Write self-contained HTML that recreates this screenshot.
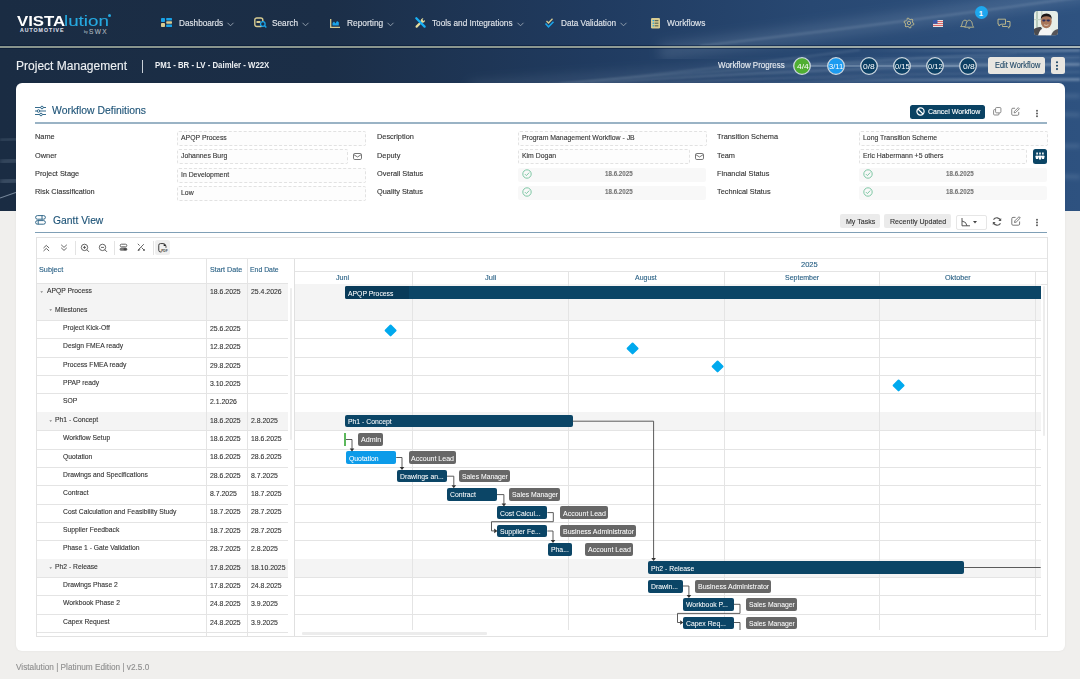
<!DOCTYPE html>
<html><head><meta charset="utf-8"><title>Vistalution</title>
<style>
html,body{margin:0;padding:0;}
body{width:1080px;height:679px;overflow:hidden;position:relative;background:#f0efed;font-family:"Liberation Sans", sans-serif;}
svg{position:absolute;overflow:visible;}
.t{-webkit-text-stroke:0.12px currentColor;}
</style></head><body>
<div style="position:absolute;left:0px;top:0px;width:1080px;height:211px;background:linear-gradient(90deg,#1a2c43 0%,#1b2e47 30%,#203b60 55%,#284872 75%,#2e5280 100%);"></div>
<svg style="left:0;top:0" width="1080" height="211" viewBox="0 0 1080 211">
<defs>
<filter id="bl1"><feGaussianBlur stdDeviation="1"/></filter>
<filter id="bl2"><feGaussianBlur stdDeviation="2"/></filter>
<filter id="bl6"><feGaussianBlur stdDeviation="6"/></filter>
</defs>
<path d="M660 52 C 800 35, 950 15, 1100 -10" stroke="#b8cde0" stroke-opacity="0.16" stroke-width="16" fill="none" filter="url(#bl6)"/>
<path d="M700 46 C 820 32, 960 14, 1090 -4" stroke="#d5e3ef" stroke-opacity="0.22" stroke-width="1.6" fill="none" filter="url(#bl1)"/>
<path d="M470 88 C 650 74, 850 64, 1080 60" stroke="#b8cde0" stroke-opacity="0.14" stroke-width="10" fill="none" filter="url(#bl6)"/>
<g fill="none" stroke="#dbe7f2" filter="url(#bl1)">
<path d="M540 85 C 660 76, 760 62, 860 50" stroke-opacity="0.25" stroke-width="1"/>
<path d="M560 84 C 680 74, 820 62, 1080 50" stroke-opacity="0.22" stroke-width="1.1"/>
<path d="M590 84 C 720 74, 880 66, 1080 64" stroke-opacity="0.24" stroke-width="1.2"/>
<path d="M620 85 C 760 78, 900 74, 1080 72" stroke-opacity="0.2" stroke-width="1.2"/>
<path d="M660 86 C 800 82, 940 80, 1080 80" stroke-opacity="0.2" stroke-width="1.5"/>
</g>


<defs><linearGradient id="hfade" x1="0" x2="1" y1="0" y2="0"><stop offset="0" stop-color="#d5e3ef" stop-opacity="0"/><stop offset="0.6" stop-color="#d5e3ef" stop-opacity="0.22"/><stop offset="1" stop-color="#d5e3ef" stop-opacity="0.3"/></linearGradient></defs>
<g filter="url(#bl1)"><rect x="860" y="49.5" width="220" height="2" fill="url(#hfade)"/><rect x="700" y="63.5" width="380" height="2.2" fill="url(#hfade)"/><rect x="780" y="78" width="300" height="2.5" fill="url(#hfade)"/><rect x="850" y="56" width="230" height="1.5" fill="url(#hfade)" opacity="0.6"/></g>
<path d="M0 140 L 20 139" stroke="#b8cde0" stroke-opacity="0.15" stroke-width="3" fill="none" filter="url(#bl1)"/>
<path d="M0 162 L 20 160" stroke="#b8cde0" stroke-opacity="0.25" stroke-width="4" fill="none" filter="url(#bl2)"/><path d="M0 182 L 20 180" stroke="#b8cde0" stroke-opacity="0.3" stroke-width="4" fill="none" filter="url(#bl2)"/>
<path d="M0 198 L 20 191" stroke="#cfe0f0" stroke-opacity="0.5" stroke-width="1.1" fill="none"/>
<path d="M1055 96 L1080 96 M1055 114 L1080 115 M1055 146 L1080 146 M1055 176 L1080 177" stroke="#b8cde0" stroke-opacity="0.22" stroke-width="3" fill="none" filter="url(#bl2)"/>
</svg>
<div style="position:absolute;left:0px;top:45.2px;width:1080px;height:1px;background:rgba(0,18,48,0.45);"></div>
<div style="position:absolute;left:0px;top:46px;width:1080px;height:1.9px;background:linear-gradient(90deg,#87938c 0%,#8b978f 50%,#a9b6b8 100%);"></div>
<div style="position:absolute;left:0px;top:47.9px;width:1080px;height:1px;background:rgba(0,18,48,0.45);"></div>
<div class="t" style="position:absolute;left:16.50px;top:13.38px;font-size:15.5px;line-height:15.5px;font-weight:700;color:#ffffff;transform:scaleX(1.0827);transform-origin:0 0;letter-spacing:0.000px;white-space:pre;-webkit-text-stroke:0;">VISTA</div>
<div class="t" style="position:absolute;left:63.50px;top:13.38px;font-size:15.5px;line-height:15.5px;font-weight:400;color:#26a9e0;transform:scaleX(1.2108);transform-origin:0 0;letter-spacing:0.000px;white-space:pre;">lution</div>
<div style="position:absolute;left:107.5px;top:14px;width:3px;height:3px;border-radius:50%;background:#26a9e0"></div>
<div class="t" style="position:absolute;left:20.00px;top:27.90px;font-size:5.2px;line-height:5.2px;font-weight:700;color:#d9dde3;transform:scaleX(1.0000);transform-origin:0 0;letter-spacing:1.002px;white-space:pre;">AUTOMOTIVE</div>
<div class="t" style="position:absolute;left:84.00px;top:31.04px;font-size:3.5px;line-height:3.5px;font-weight:400;color:#9aa6b3;transform:scaleX(1.0000);transform-origin:0 0;letter-spacing:0.000px;white-space:pre;">by</div>
<div class="t" style="position:absolute;left:89.00px;top:29.00px;font-size:6.5px;line-height:6.5px;font-weight:400;color:#aab4bd;transform:scaleX(1.0000);transform-origin:0 0;letter-spacing:1.419px;white-space:pre;">SWX</div>
<svg style="left:161px;top:18px" width="11" height="9" viewBox="0 0 11 9">
<rect x="0" y="0" width="4" height="4" rx="0.8" fill="#1aa3e8"/><rect x="0" y="5" width="4" height="4" rx="0.8" fill="#d8cc92"/>
<rect x="5.2" y="0" width="5.8" height="2.4" rx="0.6" fill="#1aa3e8"/><rect x="5.2" y="3.3" width="5.8" height="2.4" rx="0.6" fill="#d8cc92"/><rect x="5.2" y="6.6" width="5.8" height="2.4" rx="0.6" fill="#1aa3e8"/>
</svg>
<div class="t" style="position:absolute;left:178.60px;top:18.65px;font-size:8.8px;line-height:8.8px;font-weight:400;color:#e3e7ec;transform:scaleX(0.9322);transform-origin:0 0;letter-spacing:0.000px;white-space:pre;">Dashboards</div>
<svg style="left:227px;top:21.5px" width="7" height="5" viewBox="0 0 7 5"><path d="M0.5 0.8 L3.5 3.8 L6.5 0.8" stroke="#9aa6b3" stroke-width="0.9" fill="none"/></svg>
<svg style="left:254px;top:17px" width="13" height="11" viewBox="0 0 13 11">
<rect x="0.8" y="1" width="8" height="8.5" rx="2" stroke="#d8cc92" stroke-width="1.4" fill="none"/>
<rect x="2.5" y="4" width="4" height="2" fill="#d8cc92"/>
<circle cx="8.8" cy="7" r="2.3" stroke="#1aa3e8" stroke-width="1.3" fill="#1b2e47"/><path d="M10.4 8.6 L12.3 10.5" stroke="#1aa3e8" stroke-width="1.4"/>
</svg>
<div class="t" style="position:absolute;left:271.70px;top:18.65px;font-size:8.8px;line-height:8.8px;font-weight:400;color:#e3e7ec;transform:scaleX(0.9372);transform-origin:0 0;letter-spacing:0.000px;white-space:pre;">Search</div>
<svg style="left:302px;top:21.5px" width="7" height="5" viewBox="0 0 7 5"><path d="M0.5 0.8 L3.5 3.8 L6.5 0.8" stroke="#9aa6b3" stroke-width="0.9" fill="none"/></svg>
<svg style="left:329.5px;top:18.5px" width="10" height="9" viewBox="0 0 10 9">
<path d="M0.7 0 L0.7 8.3 L10 8.3" stroke="#d8cc92" stroke-width="1.3" fill="none"/>
<path d="M2.5 6.5 L2.5 4 L4 2.5 L5.5 4.5 L7 2 L8.8 3.2 L8.8 6.5 Z" fill="#1aa3e8"/>
</svg>
<div class="t" style="position:absolute;left:346.80px;top:18.65px;font-size:8.8px;line-height:8.8px;font-weight:400;color:#e3e7ec;transform:scaleX(0.9497);transform-origin:0 0;letter-spacing:0.000px;white-space:pre;">Reporting</div>
<svg style="left:387px;top:21.5px" width="7" height="5" viewBox="0 0 7 5"><path d="M0.5 0.8 L3.5 3.8 L6.5 0.8" stroke="#9aa6b3" stroke-width="0.9" fill="none"/></svg>
<svg style="left:414.5px;top:17px" width="11" height="11" viewBox="0 0 11 11">
<path d="M1.6 9.6 L7 4.2" stroke="#e6dc9c" stroke-width="2.2" stroke-linecap="round"/>
<path d="M6.2 5.2 C5 3.8, 6.2 1.2, 8.4 1.3 L7.4 2.9 L8.6 4 L10 3 C10.2 5, 8.2 6.4, 6.2 5.2 Z" fill="#e6dc9c"/>
<path d="M1.3 1.3 L9.6 9.6" stroke="#19b0f5" stroke-width="2.3" stroke-linecap="round"/>
</svg>
<div class="t" style="position:absolute;left:431.80px;top:18.65px;font-size:8.8px;line-height:8.8px;font-weight:400;color:#e3e7ec;transform:scaleX(0.9355);transform-origin:0 0;letter-spacing:0.000px;white-space:pre;">Tools and Integrations</div>
<svg style="left:516.5px;top:21.5px" width="7" height="5" viewBox="0 0 7 5"><path d="M0.5 0.8 L3.5 3.8 L6.5 0.8" stroke="#9aa6b3" stroke-width="0.9" fill="none"/></svg>
<svg style="left:545px;top:17.5px" width="9" height="10" viewBox="0 0 9 10">
<path d="M1.5 3 L3.5 5 L7.5 0.8" stroke="#d8cc92" stroke-width="1.3" fill="none"/>
<path d="M0.5 5.5 L3.5 8.8 L8.5 3.8" stroke="#1aa3e8" stroke-width="1.6" fill="none"/>
</svg>
<div class="t" style="position:absolute;left:561.30px;top:18.65px;font-size:8.8px;line-height:8.8px;font-weight:400;color:#e3e7ec;transform:scaleX(0.9323);transform-origin:0 0;letter-spacing:0.000px;white-space:pre;">Data Validation</div>
<svg style="left:620.3px;top:21.5px" width="7" height="5" viewBox="0 0 7 5"><path d="M0.5 0.8 L3.5 3.8 L6.5 0.8" stroke="#9aa6b3" stroke-width="0.9" fill="none"/></svg>
<svg style="left:651px;top:17.5px" width="9" height="10.5" viewBox="0 0 9 10.5">
<rect x="0" y="0" width="9" height="10.5" rx="1.2" fill="#d8cc92"/>
<rect x="1.6" y="2" width="1.4" height="1.2" fill="#1aa3e8"/><rect x="3.6" y="2" width="3.8" height="1.2" fill="#5d6b5a"/>
<rect x="1.6" y="4.6" width="1.4" height="1.2" fill="#1aa3e8"/><rect x="3.6" y="4.6" width="3.8" height="1.2" fill="#5d6b5a"/>
<rect x="1.6" y="7.2" width="1.4" height="1.2" fill="#1aa3e8"/><rect x="3.6" y="7.2" width="3.8" height="1.2" fill="#5d6b5a"/>
</svg>
<div class="t" style="position:absolute;left:667.20px;top:18.65px;font-size:8.8px;line-height:8.8px;font-weight:400;color:#e3e7ec;transform:scaleX(0.9484);transform-origin:0 0;letter-spacing:0.000px;white-space:pre;">Workflows</div>
<svg style="left:903px;top:17.3px" width="12" height="12" viewBox="0 0 12 12">
<path d="M9.90 6.00 L10.96 6.63 L10.61 7.94 L9.38 7.95 L7.95 9.38 L7.94 10.61 L6.63 10.96 L6.00 9.90 L4.05 9.38 L2.98 9.98 L2.02 9.02 L2.62 7.95 L2.10 6.00 L1.04 5.37 L1.39 4.06 L2.62 4.05 L4.05 2.62 L4.06 1.39 L5.37 1.04 L6.00 2.10 L7.95 2.62 L9.02 2.02 L9.98 2.98 L9.38 4.05 Z" stroke="#b7b48c" stroke-width="0.95" fill="none" stroke-linejoin="round"/>
<circle cx="6" cy="6" r="1.7" stroke="#b7b48c" stroke-width="0.95" fill="none"/>
</svg>
<svg style="left:932.8px;top:20.2px" width="10" height="7" viewBox="0 0 10 7">
<rect x="0" y="0" width="10" height="7" fill="#e8e3e3"/>
<rect x="0" y="1" width="10" height="1" fill="#d66"/><rect x="0" y="3" width="10" height="1" fill="#d66"/><rect x="0" y="5" width="10" height="1" fill="#d66"/>
<rect x="0" y="0" width="4.5" height="3.8" fill="#3b5aa8"/>
</svg>
<svg style="left:960px;top:18.5px" width="14" height="10" viewBox="0 0 14 10">
<path d="M0.6 7.6 C1.8 6.8, 2 5.2, 2.3 3.8 C2.7 2, 3.8 1.2, 5 1.2 C6 1.2, 6.8 1.6, 7.3 2.4" stroke="#b7b48c" stroke-width="0.95" fill="none" stroke-linejoin="round"/>
<path d="M0.6 7.6 H5" stroke="#b7b48c" stroke-width="0.95"/>
<path d="M4.5 8.2 C5.8 7.3, 6 5.6, 6.3 4 C6.7 2.2, 7.9 1.2, 9.2 1.2 C10.5 1.2, 11.7 2.2, 12.1 4 C12.4 5.6, 12.6 7.3, 13.8 8.2 Z" stroke="#b7b48c" stroke-width="0.95" fill="none" stroke-linejoin="round"/>
<path d="M8.2 8.8 C8.4 9.7, 10 9.7, 10.2 8.8" stroke="#b7b48c" stroke-width="0.9" fill="none"/>
</svg>
<div style="position:absolute;left:974.5px;top:6.3px;width:13px;height:13px;border-radius:50%;background:#1ea7ee"></div>
<div class="t" style="position:absolute;left:979.00px;top:10.17px;font-size:7px;line-height:7px;font-weight:700;color:#ffffff;transform:scaleX(1.0000);transform-origin:0 0;letter-spacing:0.000px;white-space:pre;">1</div>
<svg style="left:997px;top:18px" width="14" height="11" viewBox="0 0 14 11">
<path d="M1 1.2 H8.5 V6.2 H4 L2 8 V6.2 H1 Z" stroke="#b7b48c" stroke-width="1" fill="none" stroke-linejoin="round"/>
<path d="M9.8 3.5 H13 V8.5 H12 V10.2 L10.3 8.5 H5.5 V7.3" stroke="#b7b48c" stroke-width="1" fill="none" stroke-linejoin="round"/>
</svg>
<svg style="left:1034px;top:11.3px" width="24" height="24.4" viewBox="0 0 24 24.4">
<defs><clipPath id="avc"><rect x="0" y="0" width="24" height="24.4" rx="3.5"/></clipPath></defs>
<g clip-path="url(#avc)">
<rect x="0" y="0" width="24" height="24.4" fill="#e6eee8"/>
<rect x="2" y="0" width="2" height="16" fill="#b9cbbd"/><rect x="7" y="0" width="1.5" height="14" fill="#c6d6c9"/><rect x="0" y="8" width="10" height="1.2" fill="#c4d3c6"/>
<path d="M0 24.4 L0 18 Q3 15.5 7 16 L12 24.4 Z" fill="#4a4a4e"/>
<path d="M4 24.4 Q6 17 11 17 Q16 17 18 20 L17 24.4 Z" fill="#f4f4f4"/>
<path d="M17 24.4 Q19 19 24 18 V24.4 Z" fill="#56555a"/>
<ellipse cx="12.3" cy="10.5" rx="5.4" ry="6.7" fill="#a8765a"/>
<path d="M6.8 8.5 Q6.5 2.5 12.5 2.4 Q18 2.5 17.8 8.5 Q16.5 5 12.3 5.2 Q8 5.2 6.8 8.5 Z" fill="#1c1718"/>
<rect x="8.3" y="8.6" width="3" height="1.8" rx="0.8" fill="#2c2f5e"/><rect x="12.9" y="8.6" width="3" height="1.8" rx="0.8" fill="#2c2f5e"/><path d="M11.3 9.2 H12.9" stroke="#2c2f5e" stroke-width="0.5"/>
<path d="M10 13.8 Q12.3 15.2 14.5 13.8" stroke="#e8d8cc" stroke-width="0.8" fill="none"/>
</g></svg>
<div class="t" style="position:absolute;left:15.80px;top:60.34px;font-size:12px;line-height:12px;font-weight:400;color:#eef1f4;transform:scaleX(1.0024);transform-origin:0 0;letter-spacing:0.000px;white-space:pre;">Project Management</div>
<div style="position:absolute;left:142px;top:60px;width:1px;height:12.5px;background:#c9d0d8;"></div>
<div class="t" style="position:absolute;left:155.00px;top:62.26px;font-size:8.2px;line-height:8.2px;font-weight:700;color:#eef1f4;transform:scaleX(0.9527);transform-origin:0 0;letter-spacing:0.000px;white-space:pre;-webkit-text-stroke:0;">PM1 - BR - LV - Daimler - W22X</div>
<div class="t" style="position:absolute;left:717.60px;top:62.16px;font-size:8.2px;line-height:8.2px;font-weight:400;color:#e9edf2;transform:scaleX(0.9743);transform-origin:0 0;letter-spacing:0.000px;white-space:pre;">Workflow Progress</div>
<div style="position:absolute;left:811px;top:65.3px;width:150px;height:1.3px;background:rgba(160,182,205,0.38);"></div>
<svg style="left:792.30px;top:55.90px" width="20" height="20" viewBox="0 0 20 20"><circle cx="10" cy="10" r="8.3" fill="#4fae32" stroke="#cdd8e0" stroke-width="1.3"/></svg>
<div class="t" style="position:absolute;left:796.80px;top:62.75px;font-size:7.5px;line-height:7.5px;font-weight:400;color:#ffffff;transform:scaleX(1.1355);transform-origin:0 0;letter-spacing:0.000px;white-space:pre;-webkit-text-stroke:0;">4/4</div>
<svg style="left:825.70px;top:55.90px" width="20" height="20" viewBox="0 0 20 20"><circle cx="10" cy="10" r="8.3" fill="#1d9bf0" stroke="#cdd8e0" stroke-width="1.3"/></svg>
<div class="t" style="position:absolute;left:828.95px;top:62.75px;font-size:7.5px;line-height:7.5px;font-weight:400;color:#ffffff;transform:scaleX(1.0153);transform-origin:0 0;letter-spacing:0.000px;white-space:pre;-webkit-text-stroke:0;">3/11</div>
<svg style="left:858.90px;top:55.90px" width="20" height="20" viewBox="0 0 20 20"><circle cx="10" cy="10" r="8.3" fill="#0d4064" stroke="#cdd8e0" stroke-width="1.3"/></svg>
<div class="t" style="position:absolute;left:863.40px;top:62.75px;font-size:7.5px;line-height:7.5px;font-weight:400;color:#ffffff;transform:scaleX(1.1355);transform-origin:0 0;letter-spacing:0.000px;white-space:pre;-webkit-text-stroke:0;">0/8</div>
<svg style="left:891.90px;top:55.90px" width="20" height="20" viewBox="0 0 20 20"><circle cx="10" cy="10" r="8.3" fill="#0d4064" stroke="#cdd8e0" stroke-width="1.3"/></svg>
<div class="t" style="position:absolute;left:894.90px;top:62.75px;font-size:7.5px;line-height:7.5px;font-weight:400;color:#ffffff;transform:scaleX(1.0101);transform-origin:0 0;letter-spacing:0.000px;white-space:pre;-webkit-text-stroke:0;">0/15</div>
<svg style="left:925.10px;top:55.90px" width="20" height="20" viewBox="0 0 20 20"><circle cx="10" cy="10" r="8.3" fill="#0d4064" stroke="#cdd8e0" stroke-width="1.3"/></svg>
<div class="t" style="position:absolute;left:928.10px;top:62.75px;font-size:7.5px;line-height:7.5px;font-weight:400;color:#ffffff;transform:scaleX(1.0101);transform-origin:0 0;letter-spacing:0.000px;white-space:pre;-webkit-text-stroke:0;">0/12</div>
<svg style="left:958.30px;top:55.90px" width="20" height="20" viewBox="0 0 20 20"><circle cx="10" cy="10" r="8.3" fill="#0d4064" stroke="#cdd8e0" stroke-width="1.3"/></svg>
<div class="t" style="position:absolute;left:962.80px;top:62.75px;font-size:7.5px;line-height:7.5px;font-weight:400;color:#ffffff;transform:scaleX(1.1355);transform-origin:0 0;letter-spacing:0.000px;white-space:pre;-webkit-text-stroke:0;">0/8</div>
<div style="position:absolute;left:987.8px;top:57px;width:57.7px;height:17px;background:#e8e6e1;border-radius:2.5px;"></div>
<div class="t" style="position:absolute;left:994.50px;top:62.16px;font-size:8.2px;line-height:8.2px;font-weight:400;color:#1f4766;transform:scaleX(0.9066);transform-origin:0 0;letter-spacing:0.000px;white-space:pre;">Edit Workflow</div>
<div style="position:absolute;left:1050.5px;top:57px;width:14px;height:17px;background:#e8e6e1;border-radius:2.5px;"></div>
<svg style="left:1054px;top:59px" width="6" height="13" viewBox="0 0 6 13"><circle cx="3" cy="3.2" r="1.05" fill="#1f4766"/><circle cx="3" cy="6.7" r="1.05" fill="#1f4766"/><circle cx="3" cy="10.1" r="1.05" fill="#1f4766"/></svg>
<div style="position:absolute;left:16px;top:83px;width:1048.5px;height:568px;background:#ffffff;border-radius:6px;box-shadow:0 0 3px rgba(0,0,0,0.05);"></div>
<svg style="left:34.5px;top:106px" width="11" height="10" viewBox="0 0 11 10">
<path d="M0 1.5 H11 M0 5 H11 M0 8.5 H11" stroke="#1f5a7f" stroke-width="0.9"/>
<circle cx="7" cy="1.5" r="1.3" fill="#fff" stroke="#1f5a7f" stroke-width="0.9"/>
<circle cx="3.5" cy="5" r="1.3" fill="#fff" stroke="#1f5a7f" stroke-width="0.9"/>
<circle cx="6" cy="8.5" r="1.3" fill="#fff" stroke="#1f5a7f" stroke-width="0.9"/>
</svg>
<div class="t" style="position:absolute;left:52.00px;top:105.31px;font-size:10.5px;line-height:10.5px;font-weight:400;color:#1c5276;transform:scaleX(0.9907);transform-origin:0 0;letter-spacing:0.000px;white-space:pre;">Workflow Definitions</div>
<div style="position:absolute;left:910px;top:104.5px;width:75.4px;height:14.3px;background:#0a4263;border-radius:2.5px;"></div>
<svg style="left:915.5px;top:107px" width="9" height="9" viewBox="0 0 9 9">
<circle cx="4.5" cy="4.5" r="3.6" stroke="#fff" stroke-width="1.2" fill="none"/><path d="M2 2 L7 7" stroke="#fff" stroke-width="1.2"/></svg>
<div class="t" style="position:absolute;left:927.80px;top:108.33px;font-size:8px;line-height:8px;font-weight:400;color:#ffffff;transform:scaleX(0.8735);transform-origin:0 0;letter-spacing:0.000px;white-space:pre;">Cancel Workflow</div>
<svg style="left:992.6px;top:107.2px" width="8.6" height="8.6" viewBox="0 0 10 10">
<rect x="3" y="0.6" width="6.2" height="6.2" rx="1.2" stroke="#6b6b6b" stroke-width="0.9" fill="none"/>
<path d="M2.8 3 H1.8 Q0.7 3 0.7 4.1 V8.2 Q0.7 9.3 1.8 9.3 H5.9 Q7 9.3 7 8.2 V7" stroke="#6b6b6b" stroke-width="0.9" fill="none"/></svg>
<svg style="left:1010.8px;top:107.2px" width="9" height="9" viewBox="0 0 10 10">
<path d="M8.6 5.5 V8 Q8.6 9.2 7.4 9.2 H2 Q0.8 9.2 0.8 8 V2.6 Q0.8 1.4 2 1.4 H4.5" stroke="#6b6b6b" stroke-width="0.9" fill="none"/>
<path d="M3.5 6.5 L3.9 4.8 L8 0.7 L9.3 2 L5.2 6.1 Z" stroke="#6b6b6b" stroke-width="0.9" fill="none" stroke-linejoin="round"/></svg>
<svg style="left:1034.0px;top:108.5px" width="6" height="9" viewBox="0 0 6 9"><circle cx="3" cy="1.8" r="0.95" fill="#555"/><circle cx="3" cy="4.5" r="0.95" fill="#555"/><circle cx="3" cy="7.2" r="0.95" fill="#555"/></svg>
<div style="position:absolute;left:34.7px;top:122.4px;width:1012.3px;height:1.5px;background:#9ab3c5;"></div>
<div class="t" style="position:absolute;left:35.30px;top:133.33px;font-size:8px;line-height:8px;font-weight:400;color:#333333;transform:scaleX(0.9200);transform-origin:0 0;letter-spacing:0.000px;white-space:pre;">Name</div>
<div style="position:absolute;left:177.4px;top:131.2px;width:186.4px;height:13.2px;border:0.8px dashed #e2e2e2;border-radius:2px;background:#fdfdfd;"></div>
<div class="t" style="position:absolute;left:180.70px;top:134.23px;font-size:8px;line-height:8px;font-weight:400;color:#333333;transform:scaleX(0.8600);transform-origin:0 0;letter-spacing:0.000px;white-space:pre;">APQP Process</div>
<div class="t" style="position:absolute;left:35.30px;top:151.53px;font-size:8px;line-height:8px;font-weight:400;color:#333333;transform:scaleX(0.9200);transform-origin:0 0;letter-spacing:0.000px;white-space:pre;">Owner</div>
<div style="position:absolute;left:177.4px;top:149.3px;width:168.9px;height:13.2px;border:0.8px dashed #e2e2e2;border-radius:2px;background:#fdfdfd;"></div>
<div class="t" style="position:absolute;left:180.70px;top:152.33px;font-size:8px;line-height:8px;font-weight:400;color:#333333;transform:scaleX(0.8600);transform-origin:0 0;letter-spacing:0.000px;white-space:pre;">Johannes Burg</div>
<div class="t" style="position:absolute;left:35.30px;top:169.83px;font-size:8px;line-height:8px;font-weight:400;color:#333333;transform:scaleX(0.9200);transform-origin:0 0;letter-spacing:0.000px;white-space:pre;">Project Stage</div>
<div style="position:absolute;left:177.4px;top:167.8px;width:186.4px;height:13.2px;border:0.8px dashed #e2e2e2;border-radius:2px;background:#fdfdfd;"></div>
<div class="t" style="position:absolute;left:180.70px;top:170.83px;font-size:8px;line-height:8px;font-weight:400;color:#333333;transform:scaleX(0.8600);transform-origin:0 0;letter-spacing:0.000px;white-space:pre;">In Development</div>
<div class="t" style="position:absolute;left:35.30px;top:188.13px;font-size:8px;line-height:8px;font-weight:400;color:#333333;transform:scaleX(0.9200);transform-origin:0 0;letter-spacing:0.000px;white-space:pre;">Risk Classification</div>
<div style="position:absolute;left:177.4px;top:185.9px;width:186.4px;height:13.2px;border:0.8px dashed #e2e2e2;border-radius:2px;background:#fdfdfd;"></div>
<div class="t" style="position:absolute;left:180.70px;top:188.93px;font-size:8px;line-height:8px;font-weight:400;color:#333333;transform:scaleX(0.8600);transform-origin:0 0;letter-spacing:0.000px;white-space:pre;">Low</div>
<div class="t" style="position:absolute;left:376.50px;top:133.33px;font-size:8px;line-height:8px;font-weight:400;color:#333333;transform:scaleX(0.9200);transform-origin:0 0;letter-spacing:0.000px;white-space:pre;">Description</div>
<div style="position:absolute;left:518.4px;top:131.2px;width:186.60000000000002px;height:13.2px;border:0.8px dashed #e2e2e2;border-radius:2px;background:#fdfdfd;"></div>
<div class="t" style="position:absolute;left:521.70px;top:134.23px;font-size:8px;line-height:8px;font-weight:400;color:#333333;transform:scaleX(0.8600);transform-origin:0 0;letter-spacing:0.000px;white-space:pre;">Program Management Workflow - JB</div>
<div class="t" style="position:absolute;left:376.50px;top:151.53px;font-size:8px;line-height:8px;font-weight:400;color:#333333;transform:scaleX(0.9200);transform-origin:0 0;letter-spacing:0.000px;white-space:pre;">Deputy</div>
<div style="position:absolute;left:518.4px;top:149.3px;width:169.80000000000007px;height:13.2px;border:0.8px dashed #e2e2e2;border-radius:2px;background:#fdfdfd;"></div>
<div class="t" style="position:absolute;left:521.70px;top:152.33px;font-size:8px;line-height:8px;font-weight:400;color:#333333;transform:scaleX(0.8600);transform-origin:0 0;letter-spacing:0.000px;white-space:pre;">Kim Dogan</div>
<div class="t" style="position:absolute;left:376.50px;top:169.83px;font-size:8px;line-height:8px;font-weight:400;color:#333333;transform:scaleX(0.9200);transform-origin:0 0;letter-spacing:0.000px;white-space:pre;">Overall Status</div>
<div style="position:absolute;left:518.4px;top:167.8px;width:187.60000000000002px;height:13.8px;background:#f8f8f8;border-radius:2px;"></div>
<svg style="left:521.6999999999999px;top:169.3px" width="10" height="10" viewBox="0 0 10 10">
<circle cx="5" cy="5" r="4.2" stroke="#72c29c" stroke-width="0.9" fill="none"/><path d="M2.9 5.1 L4.4 6.6 L7.2 3.6" stroke="#72c29c" stroke-width="0.9" fill="none"/></svg>
<div class="t" style="position:absolute;left:605.40px;top:171.14px;font-size:6.8px;line-height:6.8px;font-weight:700;color:#777777;transform:scaleX(0.9131);transform-origin:0 0;letter-spacing:0.000px;white-space:pre;">18.6.2025</div>
<div class="t" style="position:absolute;left:376.50px;top:188.13px;font-size:8px;line-height:8px;font-weight:400;color:#333333;transform:scaleX(0.9200);transform-origin:0 0;letter-spacing:0.000px;white-space:pre;">Quality Status</div>
<div style="position:absolute;left:518.4px;top:185.9px;width:187.60000000000002px;height:13.8px;background:#f8f8f8;border-radius:2px;"></div>
<svg style="left:521.6999999999999px;top:187.4px" width="10" height="10" viewBox="0 0 10 10">
<circle cx="5" cy="5" r="4.2" stroke="#72c29c" stroke-width="0.9" fill="none"/><path d="M2.9 5.1 L4.4 6.6 L7.2 3.6" stroke="#72c29c" stroke-width="0.9" fill="none"/></svg>
<div class="t" style="position:absolute;left:605.40px;top:189.24px;font-size:6.8px;line-height:6.8px;font-weight:700;color:#777777;transform:scaleX(0.9131);transform-origin:0 0;letter-spacing:0.000px;white-space:pre;">18.6.2025</div>
<div class="t" style="position:absolute;left:717.20px;top:133.33px;font-size:8px;line-height:8px;font-weight:400;color:#333333;transform:scaleX(0.9200);transform-origin:0 0;letter-spacing:0.000px;white-space:pre;">Transition Schema</div>
<div style="position:absolute;left:859.4px;top:131.2px;width:186.80000000000007px;height:13.2px;border:0.8px dashed #e2e2e2;border-radius:2px;background:#fdfdfd;"></div>
<div class="t" style="position:absolute;left:862.70px;top:134.23px;font-size:8px;line-height:8px;font-weight:400;color:#333333;transform:scaleX(0.8600);transform-origin:0 0;letter-spacing:0.000px;white-space:pre;">Long Transition Scheme</div>
<div class="t" style="position:absolute;left:717.20px;top:151.53px;font-size:8px;line-height:8px;font-weight:400;color:#333333;transform:scaleX(0.9200);transform-origin:0 0;letter-spacing:0.000px;white-space:pre;">Team</div>
<div style="position:absolute;left:859.4px;top:149.3px;width:165.89999999999998px;height:13.2px;border:0.8px dashed #e2e2e2;border-radius:2px;background:#fdfdfd;"></div>
<div class="t" style="position:absolute;left:862.70px;top:152.33px;font-size:8px;line-height:8px;font-weight:400;color:#333333;transform:scaleX(0.8600);transform-origin:0 0;letter-spacing:0.000px;white-space:pre;">Eric Habermann +5 others</div>
<div class="t" style="position:absolute;left:717.20px;top:169.83px;font-size:8px;line-height:8px;font-weight:400;color:#333333;transform:scaleX(0.9200);transform-origin:0 0;letter-spacing:0.000px;white-space:pre;">Financial Status</div>
<div style="position:absolute;left:859.4px;top:167.8px;width:187.80000000000007px;height:13.8px;background:#f8f8f8;border-radius:2px;"></div>
<svg style="left:862.6999999999999px;top:169.3px" width="10" height="10" viewBox="0 0 10 10">
<circle cx="5" cy="5" r="4.2" stroke="#72c29c" stroke-width="0.9" fill="none"/><path d="M2.9 5.1 L4.4 6.6 L7.2 3.6" stroke="#72c29c" stroke-width="0.9" fill="none"/></svg>
<div class="t" style="position:absolute;left:946.40px;top:171.14px;font-size:6.8px;line-height:6.8px;font-weight:700;color:#777777;transform:scaleX(0.9131);transform-origin:0 0;letter-spacing:0.000px;white-space:pre;">18.6.2025</div>
<div class="t" style="position:absolute;left:717.20px;top:188.13px;font-size:8px;line-height:8px;font-weight:400;color:#333333;transform:scaleX(0.9200);transform-origin:0 0;letter-spacing:0.000px;white-space:pre;">Technical Status</div>
<div style="position:absolute;left:859.4px;top:185.9px;width:187.80000000000007px;height:13.8px;background:#f8f8f8;border-radius:2px;"></div>
<svg style="left:862.6999999999999px;top:187.4px" width="10" height="10" viewBox="0 0 10 10">
<circle cx="5" cy="5" r="4.2" stroke="#72c29c" stroke-width="0.9" fill="none"/><path d="M2.9 5.1 L4.4 6.6 L7.2 3.6" stroke="#72c29c" stroke-width="0.9" fill="none"/></svg>
<div class="t" style="position:absolute;left:946.40px;top:189.24px;font-size:6.8px;line-height:6.8px;font-weight:700;color:#777777;transform:scaleX(0.9131);transform-origin:0 0;letter-spacing:0.000px;white-space:pre;">18.6.2025</div>
<svg style="left:353.4px;top:153px" width="9" height="7" viewBox="0 0 9 7">
<rect x="0.5" y="0.5" width="8" height="6" rx="1.3" stroke="#666" stroke-width="0.9" fill="none"/><path d="M0.8 1.6 L4.5 4 L8.2 1.6" stroke="#666" stroke-width="0.9" fill="none"/></svg>
<svg style="left:695px;top:153px" width="9" height="7" viewBox="0 0 9 7">
<rect x="0.5" y="0.5" width="8" height="6" rx="1.3" stroke="#666" stroke-width="0.9" fill="none"/><path d="M0.8 1.6 L4.5 4 L8.2 1.6" stroke="#666" stroke-width="0.9" fill="none"/></svg>
<div style="position:absolute;left:1032.8px;top:149.1px;width:14.4px;height:14.8px;background:#0b4565;border-radius:2.5px;"></div>
<svg style="left:1035px;top:152px" width="10" height="9" viewBox="0 0 10 9">
<rect x="1.3" y="0.5" width="1.6" height="2" fill="#fff"/><rect x="4.2" y="0.5" width="1.6" height="2" fill="#fff"/><rect x="7.1" y="0.5" width="1.6" height="2" fill="#fff"/>
<path d="M0.3 4 Q2 3 3.5 4 L3 7 H1 Z M3.3 3.8 Q5 3 6.7 3.8 L6 7.5 H4 Z M6.5 4 Q8 3 9.7 4 L9 7 H7 Z" fill="#fff"/></svg>
<svg style="left:34.5px;top:215px" width="11" height="10" viewBox="0 0 11 10">
<rect x="0.6" y="0.6" width="9.8" height="3.6" rx="1.8" stroke="#1f5a7f" stroke-width="0.9" fill="none"/>
<rect x="0.6" y="5.6" width="9.8" height="3.6" rx="1.8" stroke="#1f5a7f" stroke-width="0.9" fill="none"/>
<path d="M7 0.6 V4.2 M3.2 5.6 V9.2" stroke="#1f5a7f" stroke-width="0.9"/></svg>
<div class="t" style="position:absolute;left:52.50px;top:214.81px;font-size:10.5px;line-height:10.5px;font-weight:400;color:#1c5276;transform:scaleX(0.9836);transform-origin:0 0;letter-spacing:0.000px;white-space:pre;">Gantt View</div>
<div style="position:absolute;left:839.5px;top:214.3px;width:40.5px;height:14px;background:#ebebeb;border-radius:2px;"></div>
<div class="t" style="position:absolute;left:845.50px;top:217.57px;font-size:7.6px;line-height:7.6px;font-weight:400;color:#333;transform:scaleX(0.9267);transform-origin:0 0;letter-spacing:0.000px;white-space:pre;">My Tasks</div>
<div style="position:absolute;left:884.4px;top:214.3px;width:67.1px;height:14px;background:#ebebeb;border-radius:2px;"></div>
<div class="t" style="position:absolute;left:890.00px;top:217.57px;font-size:7.6px;line-height:7.6px;font-weight:400;color:#333;transform:scaleX(0.9310);transform-origin:0 0;letter-spacing:0.000px;white-space:pre;">Recently Updated</div>
<div style="position:absolute;left:955.5px;top:214.5px;width:29.5px;height:13.6px;border:0.8px solid #e6e6e6;border-radius:2px;background:#fff;"></div>
<svg style="left:960.5px;top:216.5px" width="10" height="10" viewBox="0 0 10 10">
<path d="M1 1 V8.8 H9" stroke="#444" stroke-width="0.9" fill="none"/><path d="M1 4 L4.5 5.5 L6 8.8" stroke="#444" stroke-width="0.9" fill="none"/></svg>
<svg style="left:973px;top:220.5px" width="4" height="3" viewBox="0 0 4 3"><path d="M0 0 H4 L2 2.5 Z" fill="#444"/></svg>
<svg style="left:992px;top:216.5px" width="10" height="9" viewBox="0 0 10 9">
<path d="M8.6 3.5 A4 4 0 0 0 1.5 2.6" stroke="#555" stroke-width="1.1" fill="none"/><path d="M1.4 5.5 A4 4 0 0 0 8.5 6.4" stroke="#555" stroke-width="1.1" fill="none"/>
<path d="M9.2 1 V3.9 H6.4 Z" fill="#555"/><path d="M0.8 8 V5.1 H3.6 Z" fill="#555"/></svg>
<svg style="left:1010.5px;top:216px" width="10" height="10" viewBox="0 0 10 10">
<path d="M8.6 5.5 V8 Q8.6 9.2 7.4 9.2 H2 Q0.8 9.2 0.8 8 V2.6 Q0.8 1.4 2 1.4 H4.5" stroke="#6b6b6b" stroke-width="0.9" fill="none"/>
<path d="M3.5 6.5 L3.9 4.8 L8 0.7 L9.3 2 L5.2 6.1 Z" stroke="#6b6b6b" stroke-width="0.9" fill="none" stroke-linejoin="round"/></svg>
<svg style="left:1034.0px;top:217.8px" width="6" height="9" viewBox="0 0 6 9"><circle cx="3" cy="1.8" r="0.95" fill="#555"/><circle cx="3" cy="4.5" r="0.95" fill="#555"/><circle cx="3" cy="7.2" r="0.95" fill="#555"/></svg>
<div style="position:absolute;left:34.7px;top:231.6px;width:1012.3px;height:1.3px;background:#7f9fb6;"></div>
<div class="t" style="position:absolute;left:16.10px;top:663.76px;font-size:8.2px;line-height:8.2px;font-weight:400;color:#8e8e8e;transform:scaleX(1.0066);transform-origin:0 0;letter-spacing:0.000px;white-space:pre;">Vistalution | Platinum Edition | v2.5.0</div>
<div style="position:absolute;left:35.5px;top:237px;width:1012px;height:399.5px;box-sizing:border-box;border:1px solid #e2e2e2;background:#fff;"></div>
<div style="position:absolute;left:36.5px;top:258px;width:1010px;height:1px;background:#e8e8e8;"></div>
<svg style="left:42px;top:243px" width="130" height="10" viewBox="0 0 130 10">
<path d="M1.5 5 L4.3 2.4 L7.1 5 M1.5 8 L4.3 5.4 L7.1 8" stroke="#555" stroke-width="0.9" fill="none"/>
<path d="M19.2 1.8 L22 4.4 L24.8 1.8 M19.2 4.8 L22 7.4 L24.8 4.8" stroke="#555" stroke-width="0.9" fill="none"/>
<circle cx="42.5" cy="4.4" r="3.2" stroke="#555" stroke-width="0.9" fill="none"/><path d="M44.8 6.7 L47 8.9 M41 4.4 H44 M42.5 2.9 V5.9" stroke="#555" stroke-width="0.9"/>
<circle cx="60.5" cy="4.4" r="3.2" stroke="#555" stroke-width="0.9" fill="none"/><path d="M62.8 6.7 L65 8.9 M59 4.4 H62" stroke="#555" stroke-width="0.9"/>
<rect x="78.2" y="1.2" width="6.6" height="2.6" rx="1.3" fill="none" stroke="#555" stroke-width="0.9"/><rect x="77.7" y="4.6" width="7.6" height="3.2" rx="1.6" fill="#777"/><rect x="81.5" y="5.2" width="3.2" height="2" rx="1" fill="#444"/>
<path d="M96.3 6.8 L101.8 1.2 M97.5 5.6 L96 7.6 L98.2 6.6 M95.8 0.8 L97.6 2.6 M99.6 4.6 L102.4 7.4 M101 7.2 L102.4 7.4 L102.2 6" stroke="#555" stroke-width="0.9" fill="none"/>
</svg>
<div style="position:absolute;left:74.5px;top:240.5px;width:0.8px;height:14.5px;background:#e3e3e3;"></div>
<div style="position:absolute;left:113.7px;top:240.5px;width:0.8px;height:14.5px;background:#e3e3e3;"></div>
<div style="position:absolute;left:152.5px;top:240.5px;width:0.8px;height:14.5px;background:#e3e3e3;"></div>
<div style="position:absolute;left:155.3px;top:240.2px;width:14.7px;height:14.5px;background:#efefef;border-radius:2.5px;"></div>
<svg style="left:157.6px;top:242.6px" width="9.5" height="9.5" viewBox="0 0 10 10">
<path d="M5.8 0.6 H2.6 Q0.8 0.6 0.8 2.4 V7.6 Q0.8 9.4 2.6 9.4 H3.6" stroke="#333" stroke-width="1" fill="none"/><path d="M5.8 0.6 Q8.2 1 8.4 3.6 V5" stroke="#333" stroke-width="1" fill="none"/><path d="M6 0.6 L8.4 3.2 L6 3.2 Z" fill="#222"/>
<text x="3.4" y="9.3" font-size="3.4" font-family="Liberation Sans" font-weight="700" fill="#444">PDF</text></svg>
<div style="position:absolute;left:36.5px;top:283.2px;width:251px;height:1px;background:#e4e4e4;"></div>
<div style="position:absolute;left:294.7px;top:271px;width:752px;height:1px;background:#e4e4e4;"></div>
<div style="position:absolute;left:294.7px;top:283.8px;width:752px;height:1px;background:#e4e4e4;"></div>
<div style="position:absolute;left:36.5px;top:283.5px;width:251px;height:18.36px;background:#f4f4f4;"></div>
<div style="position:absolute;left:294.7px;top:283.5px;width:746px;height:18.36px;background:#f4f4f4;"></div>
<div style="position:absolute;left:36.5px;top:301.66px;width:251px;height:1px;background:#e4e4e4;"></div>
<div style="position:absolute;left:294.7px;top:301.66px;width:746px;height:1px;background:#e4e4e4;"></div>
<div style="position:absolute;left:36.5px;top:301.86px;width:251px;height:18.36px;background:#f4f4f4;"></div>
<div style="position:absolute;left:294.7px;top:301.86px;width:746px;height:18.36px;background:#f4f4f4;"></div>
<div style="position:absolute;left:36.5px;top:320.02000000000004px;width:251px;height:1px;background:#e4e4e4;"></div>
<div style="position:absolute;left:294.7px;top:320.02000000000004px;width:746px;height:1px;background:#e4e4e4;"></div>
<div style="position:absolute;left:36.5px;top:338.38000000000005px;width:251px;height:1px;background:#e4e4e4;"></div>
<div style="position:absolute;left:294.7px;top:338.38000000000005px;width:746px;height:1px;background:#e4e4e4;"></div>
<div style="position:absolute;left:36.5px;top:356.74px;width:251px;height:1px;background:#e4e4e4;"></div>
<div style="position:absolute;left:294.7px;top:356.74px;width:746px;height:1px;background:#e4e4e4;"></div>
<div style="position:absolute;left:36.5px;top:375.1px;width:251px;height:1px;background:#e4e4e4;"></div>
<div style="position:absolute;left:294.7px;top:375.1px;width:746px;height:1px;background:#e4e4e4;"></div>
<div style="position:absolute;left:36.5px;top:393.46000000000004px;width:251px;height:1px;background:#e4e4e4;"></div>
<div style="position:absolute;left:294.7px;top:393.46000000000004px;width:746px;height:1px;background:#e4e4e4;"></div>
<div style="position:absolute;left:36.5px;top:411.82px;width:251px;height:1px;background:#e4e4e4;"></div>
<div style="position:absolute;left:294.7px;top:411.82px;width:746px;height:1px;background:#e4e4e4;"></div>
<div style="position:absolute;left:36.5px;top:412.02px;width:251px;height:18.36px;background:#f4f4f4;"></div>
<div style="position:absolute;left:294.7px;top:412.02px;width:746px;height:18.36px;background:#f4f4f4;"></div>
<div style="position:absolute;left:36.5px;top:430.18px;width:251px;height:1px;background:#e4e4e4;"></div>
<div style="position:absolute;left:294.7px;top:430.18px;width:746px;height:1px;background:#e4e4e4;"></div>
<div style="position:absolute;left:36.5px;top:448.54px;width:251px;height:1px;background:#e4e4e4;"></div>
<div style="position:absolute;left:294.7px;top:448.54px;width:746px;height:1px;background:#e4e4e4;"></div>
<div style="position:absolute;left:36.5px;top:466.90000000000003px;width:251px;height:1px;background:#e4e4e4;"></div>
<div style="position:absolute;left:294.7px;top:466.90000000000003px;width:746px;height:1px;background:#e4e4e4;"></div>
<div style="position:absolute;left:36.5px;top:485.26000000000005px;width:251px;height:1px;background:#e4e4e4;"></div>
<div style="position:absolute;left:294.7px;top:485.26000000000005px;width:746px;height:1px;background:#e4e4e4;"></div>
<div style="position:absolute;left:36.5px;top:503.62px;width:251px;height:1px;background:#e4e4e4;"></div>
<div style="position:absolute;left:294.7px;top:503.62px;width:746px;height:1px;background:#e4e4e4;"></div>
<div style="position:absolute;left:36.5px;top:521.9799999999999px;width:251px;height:1px;background:#e4e4e4;"></div>
<div style="position:absolute;left:294.7px;top:521.9799999999999px;width:746px;height:1px;background:#e4e4e4;"></div>
<div style="position:absolute;left:36.5px;top:540.34px;width:251px;height:1px;background:#e4e4e4;"></div>
<div style="position:absolute;left:294.7px;top:540.34px;width:746px;height:1px;background:#e4e4e4;"></div>
<div style="position:absolute;left:36.5px;top:558.6999999999999px;width:251px;height:1px;background:#e4e4e4;"></div>
<div style="position:absolute;left:294.7px;top:558.6999999999999px;width:746px;height:1px;background:#e4e4e4;"></div>
<div style="position:absolute;left:36.5px;top:558.9px;width:251px;height:18.36px;background:#f4f4f4;"></div>
<div style="position:absolute;left:294.7px;top:558.9px;width:746px;height:18.36px;background:#f4f4f4;"></div>
<div style="position:absolute;left:36.5px;top:577.06px;width:251px;height:1px;background:#e4e4e4;"></div>
<div style="position:absolute;left:294.7px;top:577.06px;width:746px;height:1px;background:#e4e4e4;"></div>
<div style="position:absolute;left:36.5px;top:595.42px;width:251px;height:1px;background:#e4e4e4;"></div>
<div style="position:absolute;left:294.7px;top:595.42px;width:746px;height:1px;background:#e4e4e4;"></div>
<div style="position:absolute;left:36.5px;top:613.78px;width:251px;height:1px;background:#e4e4e4;"></div>
<div style="position:absolute;left:294.7px;top:613.78px;width:746px;height:1px;background:#e4e4e4;"></div>
<div style="position:absolute;left:36.5px;top:632.14px;width:251px;height:1px;background:#e4e4e4;"></div>
<div style="position:absolute;left:206.3px;top:258.5px;width:0.9px;height:377px;background:#e4e4e4;"></div>
<div style="position:absolute;left:247.1px;top:258.5px;width:0.9px;height:377px;background:#e4e4e4;"></div>
<div style="position:absolute;left:294.1px;top:258.5px;width:1px;height:377px;background:#e0e0e0;"></div>
<div style="position:absolute;left:289.6px;top:288px;width:2.3px;height:152px;background:#ededed;border-radius:1px;"></div>
<div style="position:absolute;left:412.0px;top:271.5px;width:1px;height:358.5px;background:#e4e4e4;"></div>
<div style="position:absolute;left:567.5px;top:271.5px;width:1px;height:358.5px;background:#e4e4e4;"></div>
<div style="position:absolute;left:723.5px;top:271.5px;width:1px;height:358.5px;background:#e4e4e4;"></div>
<div style="position:absolute;left:879.0px;top:271.5px;width:1px;height:358.5px;background:#e4e4e4;"></div>
<div style="position:absolute;left:1035.0px;top:271.5px;width:1px;height:358.5px;background:#e4e4e4;"></div>
<div style="position:absolute;left:1042.8px;top:286px;width:2.3px;height:150px;background:#ededed;border-radius:1px;"></div>
<div style="position:absolute;left:302px;top:632.2px;width:185px;height:2.6px;background:#ececec;border-radius:1px;"></div>
<div class="t" style="position:absolute;left:38.50px;top:265.75px;font-size:7.5px;line-height:7.5px;font-weight:400;color:#2b6286;transform:scaleX(0.9678);transform-origin:0 0;letter-spacing:0.000px;white-space:pre;">Subject</div>
<div class="t" style="position:absolute;left:210.00px;top:265.75px;font-size:7.5px;line-height:7.5px;font-weight:400;color:#2b6286;transform:scaleX(0.9541);transform-origin:0 0;letter-spacing:0.000px;white-space:pre;">Start Date</div>
<div class="t" style="position:absolute;left:250.30px;top:265.75px;font-size:7.5px;line-height:7.5px;font-weight:400;color:#2b6286;transform:scaleX(0.9171);transform-origin:0 0;letter-spacing:0.000px;white-space:pre;">End Date</div>
<div class="t" style="position:absolute;left:801.00px;top:261.37px;font-size:7px;line-height:7px;font-weight:400;color:#2b6286;transform:scaleX(1.0754);transform-origin:0 0;letter-spacing:0.000px;white-space:pre;">2025</div>
<div class="t" style="position:absolute;left:336.05px;top:274.05px;font-size:7.5px;line-height:7.5px;font-weight:400;color:#2b6286;transform:scaleX(0.9604);transform-origin:0 0;letter-spacing:0.000px;white-space:pre;">Juni</div>
<div class="t" style="position:absolute;left:484.75px;top:274.05px;font-size:7.5px;line-height:7.5px;font-weight:400;color:#2b6286;transform:scaleX(0.9985);transform-origin:0 0;letter-spacing:0.000px;white-space:pre;">Juli</div>
<div class="t" style="position:absolute;left:635.30px;top:274.05px;font-size:7.5px;line-height:7.5px;font-weight:400;color:#2b6286;transform:scaleX(0.9288);transform-origin:0 0;letter-spacing:0.000px;white-space:pre;">August</div>
<div class="t" style="position:absolute;left:784.95px;top:274.05px;font-size:7.5px;line-height:7.5px;font-weight:400;color:#2b6286;transform:scaleX(0.9322);transform-origin:0 0;letter-spacing:0.000px;white-space:pre;">September</div>
<div class="t" style="position:absolute;left:945.00px;top:274.05px;font-size:7.5px;line-height:7.5px;font-weight:400;color:#2b6286;transform:scaleX(0.9639);transform-origin:0 0;letter-spacing:0.000px;white-space:pre;">Oktober</div>
<svg style="left:40.400000000000006px;top:291.1px" width="3.4" height="2.4" viewBox="0 0 4 3"><path d="M0.3 0.3 H3.7 L2 2.6 Z" fill="#888"/></svg>
<div class="t" style="position:absolute;left:47.20px;top:287.27px;font-size:7.6px;line-height:7.6px;font-weight:400;color:#333333;transform:scaleX(0.8900);transform-origin:0 0;letter-spacing:0.000px;white-space:pre;">APQP Process</div>
<div class="t" style="position:absolute;left:210.30px;top:288.15px;font-size:7.5px;line-height:7.5px;font-weight:400;color:#333333;transform:scaleX(0.9200);transform-origin:0 0;letter-spacing:0.000px;white-space:pre;">18.6.2025</div>
<div class="t" style="position:absolute;left:250.60px;top:288.15px;font-size:7.5px;line-height:7.5px;font-weight:400;color:#333333;transform:scaleX(0.9200);transform-origin:0 0;letter-spacing:0.000px;white-space:pre;">25.4.2026</div>
<svg style="left:48.5px;top:309.46000000000004px" width="3.4" height="2.4" viewBox="0 0 4 3"><path d="M0.3 0.3 H3.7 L2 2.6 Z" fill="#888"/></svg>
<div class="t" style="position:absolute;left:55.30px;top:305.63px;font-size:7.6px;line-height:7.6px;font-weight:400;color:#333333;transform:scaleX(0.8900);transform-origin:0 0;letter-spacing:0.000px;white-space:pre;">Milestones</div>
<div class="t" style="position:absolute;left:62.80px;top:323.99px;font-size:7.6px;line-height:7.6px;font-weight:400;color:#333333;transform:scaleX(0.8900);transform-origin:0 0;letter-spacing:0.000px;white-space:pre;">Project Kick-Off</div>
<div class="t" style="position:absolute;left:210.30px;top:324.87px;font-size:7.5px;line-height:7.5px;font-weight:400;color:#333333;transform:scaleX(0.9200);transform-origin:0 0;letter-spacing:0.000px;white-space:pre;">25.6.2025</div>
<div class="t" style="position:absolute;left:62.80px;top:342.35px;font-size:7.6px;line-height:7.6px;font-weight:400;color:#333333;transform:scaleX(0.8900);transform-origin:0 0;letter-spacing:0.000px;white-space:pre;">Design FMEA ready</div>
<div class="t" style="position:absolute;left:210.30px;top:343.23px;font-size:7.5px;line-height:7.5px;font-weight:400;color:#333333;transform:scaleX(0.9200);transform-origin:0 0;letter-spacing:0.000px;white-space:pre;">12.8.2025</div>
<div class="t" style="position:absolute;left:62.80px;top:360.71px;font-size:7.6px;line-height:7.6px;font-weight:400;color:#333333;transform:scaleX(0.8900);transform-origin:0 0;letter-spacing:0.000px;white-space:pre;">Process FMEA ready</div>
<div class="t" style="position:absolute;left:210.30px;top:361.59px;font-size:7.5px;line-height:7.5px;font-weight:400;color:#333333;transform:scaleX(0.9200);transform-origin:0 0;letter-spacing:0.000px;white-space:pre;">29.8.2025</div>
<div class="t" style="position:absolute;left:62.80px;top:379.07px;font-size:7.6px;line-height:7.6px;font-weight:400;color:#333333;transform:scaleX(0.8900);transform-origin:0 0;letter-spacing:0.000px;white-space:pre;">PPAP ready</div>
<div class="t" style="position:absolute;left:210.30px;top:379.95px;font-size:7.5px;line-height:7.5px;font-weight:400;color:#333333;transform:scaleX(0.9200);transform-origin:0 0;letter-spacing:0.000px;white-space:pre;">3.10.2025</div>
<div class="t" style="position:absolute;left:62.80px;top:397.43px;font-size:7.6px;line-height:7.6px;font-weight:400;color:#333333;transform:scaleX(0.8900);transform-origin:0 0;letter-spacing:0.000px;white-space:pre;">SOP</div>
<div class="t" style="position:absolute;left:210.30px;top:398.31px;font-size:7.5px;line-height:7.5px;font-weight:400;color:#333333;transform:scaleX(0.9200);transform-origin:0 0;letter-spacing:0.000px;white-space:pre;">2.1.2026</div>
<svg style="left:48.5px;top:419.62px" width="3.4" height="2.4" viewBox="0 0 4 3"><path d="M0.3 0.3 H3.7 L2 2.6 Z" fill="#888"/></svg>
<div class="t" style="position:absolute;left:55.30px;top:415.79px;font-size:7.6px;line-height:7.6px;font-weight:400;color:#333333;transform:scaleX(0.8900);transform-origin:0 0;letter-spacing:0.000px;white-space:pre;">Ph1 - Concept</div>
<div class="t" style="position:absolute;left:210.30px;top:416.67px;font-size:7.5px;line-height:7.5px;font-weight:400;color:#333333;transform:scaleX(0.9200);transform-origin:0 0;letter-spacing:0.000px;white-space:pre;">18.6.2025</div>
<div class="t" style="position:absolute;left:250.60px;top:416.67px;font-size:7.5px;line-height:7.5px;font-weight:400;color:#333333;transform:scaleX(0.9200);transform-origin:0 0;letter-spacing:0.000px;white-space:pre;">2.8.2025</div>
<div class="t" style="position:absolute;left:62.80px;top:434.15px;font-size:7.6px;line-height:7.6px;font-weight:400;color:#333333;transform:scaleX(0.8900);transform-origin:0 0;letter-spacing:0.000px;white-space:pre;">Workflow Setup</div>
<div class="t" style="position:absolute;left:210.30px;top:435.03px;font-size:7.5px;line-height:7.5px;font-weight:400;color:#333333;transform:scaleX(0.9200);transform-origin:0 0;letter-spacing:0.000px;white-space:pre;">18.6.2025</div>
<div class="t" style="position:absolute;left:250.60px;top:435.03px;font-size:7.5px;line-height:7.5px;font-weight:400;color:#333333;transform:scaleX(0.9200);transform-origin:0 0;letter-spacing:0.000px;white-space:pre;">18.6.2025</div>
<div class="t" style="position:absolute;left:62.80px;top:452.51px;font-size:7.6px;line-height:7.6px;font-weight:400;color:#333333;transform:scaleX(0.8900);transform-origin:0 0;letter-spacing:0.000px;white-space:pre;">Quotation</div>
<div class="t" style="position:absolute;left:210.30px;top:453.39px;font-size:7.5px;line-height:7.5px;font-weight:400;color:#333333;transform:scaleX(0.9200);transform-origin:0 0;letter-spacing:0.000px;white-space:pre;">18.6.2025</div>
<div class="t" style="position:absolute;left:250.60px;top:453.39px;font-size:7.5px;line-height:7.5px;font-weight:400;color:#333333;transform:scaleX(0.9200);transform-origin:0 0;letter-spacing:0.000px;white-space:pre;">28.6.2025</div>
<div class="t" style="position:absolute;left:62.80px;top:470.87px;font-size:7.6px;line-height:7.6px;font-weight:400;color:#333333;transform:scaleX(0.8900);transform-origin:0 0;letter-spacing:0.000px;white-space:pre;">Drawings and Specifications</div>
<div class="t" style="position:absolute;left:210.30px;top:471.75px;font-size:7.5px;line-height:7.5px;font-weight:400;color:#333333;transform:scaleX(0.9200);transform-origin:0 0;letter-spacing:0.000px;white-space:pre;">28.6.2025</div>
<div class="t" style="position:absolute;left:250.60px;top:471.75px;font-size:7.5px;line-height:7.5px;font-weight:400;color:#333333;transform:scaleX(0.9200);transform-origin:0 0;letter-spacing:0.000px;white-space:pre;">8.7.2025</div>
<div class="t" style="position:absolute;left:62.80px;top:489.23px;font-size:7.6px;line-height:7.6px;font-weight:400;color:#333333;transform:scaleX(0.8900);transform-origin:0 0;letter-spacing:0.000px;white-space:pre;">Contract</div>
<div class="t" style="position:absolute;left:210.30px;top:490.11px;font-size:7.5px;line-height:7.5px;font-weight:400;color:#333333;transform:scaleX(0.9200);transform-origin:0 0;letter-spacing:0.000px;white-space:pre;">8.7.2025</div>
<div class="t" style="position:absolute;left:250.60px;top:490.11px;font-size:7.5px;line-height:7.5px;font-weight:400;color:#333333;transform:scaleX(0.9200);transform-origin:0 0;letter-spacing:0.000px;white-space:pre;">18.7.2025</div>
<div class="t" style="position:absolute;left:62.80px;top:507.59px;font-size:7.6px;line-height:7.6px;font-weight:400;color:#333333;transform:scaleX(0.8900);transform-origin:0 0;letter-spacing:0.000px;white-space:pre;">Cost Calculation and Feasibility Study</div>
<div class="t" style="position:absolute;left:210.30px;top:508.47px;font-size:7.5px;line-height:7.5px;font-weight:400;color:#333333;transform:scaleX(0.9200);transform-origin:0 0;letter-spacing:0.000px;white-space:pre;">18.7.2025</div>
<div class="t" style="position:absolute;left:250.60px;top:508.47px;font-size:7.5px;line-height:7.5px;font-weight:400;color:#333333;transform:scaleX(0.9200);transform-origin:0 0;letter-spacing:0.000px;white-space:pre;">28.7.2025</div>
<div class="t" style="position:absolute;left:62.80px;top:525.95px;font-size:7.6px;line-height:7.6px;font-weight:400;color:#333333;transform:scaleX(0.8900);transform-origin:0 0;letter-spacing:0.000px;white-space:pre;">Supplier Feedback</div>
<div class="t" style="position:absolute;left:210.30px;top:526.83px;font-size:7.5px;line-height:7.5px;font-weight:400;color:#333333;transform:scaleX(0.9200);transform-origin:0 0;letter-spacing:0.000px;white-space:pre;">18.7.2025</div>
<div class="t" style="position:absolute;left:250.60px;top:526.83px;font-size:7.5px;line-height:7.5px;font-weight:400;color:#333333;transform:scaleX(0.9200);transform-origin:0 0;letter-spacing:0.000px;white-space:pre;">28.7.2025</div>
<div class="t" style="position:absolute;left:62.80px;top:544.31px;font-size:7.6px;line-height:7.6px;font-weight:400;color:#333333;transform:scaleX(0.8900);transform-origin:0 0;letter-spacing:0.000px;white-space:pre;">Phase 1 - Gate Validation</div>
<div class="t" style="position:absolute;left:210.30px;top:545.19px;font-size:7.5px;line-height:7.5px;font-weight:400;color:#333333;transform:scaleX(0.9200);transform-origin:0 0;letter-spacing:0.000px;white-space:pre;">28.7.2025</div>
<div class="t" style="position:absolute;left:250.60px;top:545.19px;font-size:7.5px;line-height:7.5px;font-weight:400;color:#333333;transform:scaleX(0.9200);transform-origin:0 0;letter-spacing:0.000px;white-space:pre;">2.8.2025</div>
<svg style="left:48.5px;top:566.5px" width="3.4" height="2.4" viewBox="0 0 4 3"><path d="M0.3 0.3 H3.7 L2 2.6 Z" fill="#888"/></svg>
<div class="t" style="position:absolute;left:55.30px;top:562.67px;font-size:7.6px;line-height:7.6px;font-weight:400;color:#333333;transform:scaleX(0.8900);transform-origin:0 0;letter-spacing:0.000px;white-space:pre;">Ph2 - Release</div>
<div class="t" style="position:absolute;left:210.30px;top:563.55px;font-size:7.5px;line-height:7.5px;font-weight:400;color:#333333;transform:scaleX(0.9200);transform-origin:0 0;letter-spacing:0.000px;white-space:pre;">17.8.2025</div>
<div class="t" style="position:absolute;left:250.60px;top:563.55px;font-size:7.5px;line-height:7.5px;font-weight:400;color:#333333;transform:scaleX(0.9200);transform-origin:0 0;letter-spacing:0.000px;white-space:pre;">18.10.2025</div>
<div class="t" style="position:absolute;left:62.80px;top:581.03px;font-size:7.6px;line-height:7.6px;font-weight:400;color:#333333;transform:scaleX(0.8900);transform-origin:0 0;letter-spacing:0.000px;white-space:pre;">Drawings Phase 2</div>
<div class="t" style="position:absolute;left:210.30px;top:581.91px;font-size:7.5px;line-height:7.5px;font-weight:400;color:#333333;transform:scaleX(0.9200);transform-origin:0 0;letter-spacing:0.000px;white-space:pre;">17.8.2025</div>
<div class="t" style="position:absolute;left:250.60px;top:581.91px;font-size:7.5px;line-height:7.5px;font-weight:400;color:#333333;transform:scaleX(0.9200);transform-origin:0 0;letter-spacing:0.000px;white-space:pre;">24.8.2025</div>
<div class="t" style="position:absolute;left:62.80px;top:599.39px;font-size:7.6px;line-height:7.6px;font-weight:400;color:#333333;transform:scaleX(0.8900);transform-origin:0 0;letter-spacing:0.000px;white-space:pre;">Workbook Phase 2</div>
<div class="t" style="position:absolute;left:210.30px;top:600.27px;font-size:7.5px;line-height:7.5px;font-weight:400;color:#333333;transform:scaleX(0.9200);transform-origin:0 0;letter-spacing:0.000px;white-space:pre;">24.8.2025</div>
<div class="t" style="position:absolute;left:250.60px;top:600.27px;font-size:7.5px;line-height:7.5px;font-weight:400;color:#333333;transform:scaleX(0.9200);transform-origin:0 0;letter-spacing:0.000px;white-space:pre;">3.9.2025</div>
<div class="t" style="position:absolute;left:62.80px;top:617.75px;font-size:7.6px;line-height:7.6px;font-weight:400;color:#333333;transform:scaleX(0.8900);transform-origin:0 0;letter-spacing:0.000px;white-space:pre;">Capex Request</div>
<div class="t" style="position:absolute;left:210.30px;top:618.63px;font-size:7.5px;line-height:7.5px;font-weight:400;color:#333333;transform:scaleX(0.9200);transform-origin:0 0;letter-spacing:0.000px;white-space:pre;">24.8.2025</div>
<div class="t" style="position:absolute;left:250.60px;top:618.63px;font-size:7.5px;line-height:7.5px;font-weight:400;color:#333333;transform:scaleX(0.9200);transform-origin:0 0;letter-spacing:0.000px;white-space:pre;">3.9.2025</div>
<div style="position:absolute;left:295px;top:284px;width:745.7px;height:346px;overflow:hidden;">
</div>
<div style="position:absolute;left:344.5px;top:286.3px;width:696.2px;height:12.7px;background:#0b4566;border-radius:2px 0 0 2px;"></div>
<div style="position:absolute;left:344.5px;top:286.3px;width:64px;height:12.7px;background:#093b59;border-radius:2px 0 0 2px;"></div>
<div class="t" style="position:absolute;left:347.50px;top:289.57px;font-size:7.6px;line-height:7.6px;font-weight:400;color:#ffffff;transform:scaleX(0.9000);transform-origin:0 0;letter-spacing:0.000px;white-space:pre;-webkit-text-stroke:0.05px #fff;">APQP Process</div>
<div style="position:absolute;left:385.70px;top:325.50px;width:9.2px;height:9.2px;background:#00a9ee;transform:rotate(45deg);border-radius:1px;"></div>
<div style="position:absolute;left:628.00px;top:343.86px;width:9.2px;height:9.2px;background:#00a9ee;transform:rotate(45deg);border-radius:1px;"></div>
<div style="position:absolute;left:713.00px;top:362.22px;width:9.2px;height:9.2px;background:#00a9ee;transform:rotate(45deg);border-radius:1px;"></div>
<div style="position:absolute;left:893.80px;top:380.58px;width:9.2px;height:9.2px;background:#00a9ee;transform:rotate(45deg);border-radius:1px;"></div>
<div style="position:absolute;left:344.5px;top:414.62px;width:228.10000000000002px;height:12.7px;background:#0b4566;border-radius:2px;"></div>
<div class="t" style="position:absolute;left:347.50px;top:417.89px;font-size:7.6px;line-height:7.6px;font-weight:400;color:#ffffff;transform:scaleX(0.9000);transform-origin:0 0;letter-spacing:0.000px;white-space:pre;-webkit-text-stroke:0.05px #fff;">Ph1 - Concept</div>
<div style="position:absolute;left:344.2px;top:432.98px;width:1.8px;height:12.7px;background:#5cb85c;"></div>
<div style="position:absolute;left:358px;top:432.98px;width:25px;height:12.7px;background:#676767;border-radius:2px;"></div>
<div class="t" style="position:absolute;left:360.80px;top:436.25px;font-size:7.6px;line-height:7.6px;font-weight:400;color:#ffffff;transform:scaleX(0.9340);transform-origin:0 0;letter-spacing:0.000px;white-space:pre;-webkit-text-stroke:0.05px #fff;">Admin</div>
<div style="position:absolute;left:345.8px;top:451.34000000000003px;width:50.39999999999998px;height:12.7px;background:#0c9be9;border-radius:2px;"></div>
<div class="t" style="position:absolute;left:348.80px;top:454.61px;font-size:7.6px;line-height:7.6px;font-weight:400;color:#ffffff;transform:scaleX(0.9000);transform-origin:0 0;letter-spacing:0.000px;white-space:pre;-webkit-text-stroke:0.05px #fff;">Quotation</div>
<div style="position:absolute;left:408.6px;top:451.34000000000003px;width:47.89999999999998px;height:12.7px;background:#676767;border-radius:2px;"></div>
<div class="t" style="position:absolute;left:411.40px;top:454.61px;font-size:7.6px;line-height:7.6px;font-weight:400;color:#ffffff;transform:scaleX(0.9257);transform-origin:0 0;letter-spacing:0.000px;white-space:pre;-webkit-text-stroke:0.05px #fff;">Account Lead</div>
<div style="position:absolute;left:396.7px;top:469.70000000000005px;width:50.30000000000001px;height:12.7px;background:#0b4566;border-radius:2px;"></div>
<div class="t" style="position:absolute;left:399.70px;top:472.97px;font-size:7.6px;line-height:7.6px;font-weight:400;color:#ffffff;transform:scaleX(0.9000);transform-origin:0 0;letter-spacing:0.000px;white-space:pre;-webkit-text-stroke:0.05px #fff;">Drawings an...</div>
<div style="position:absolute;left:459.4px;top:469.70000000000005px;width:50.80000000000001px;height:12.7px;background:#676767;border-radius:2px;"></div>
<div class="t" style="position:absolute;left:462.20px;top:472.97px;font-size:7.6px;line-height:7.6px;font-weight:400;color:#ffffff;transform:scaleX(0.8983);transform-origin:0 0;letter-spacing:0.000px;white-space:pre;-webkit-text-stroke:0.05px #fff;">Sales Manager</div>
<div style="position:absolute;left:447px;top:488.06px;width:50px;height:12.7px;background:#0b4566;border-radius:2px;"></div>
<div class="t" style="position:absolute;left:450.00px;top:491.33px;font-size:7.6px;line-height:7.6px;font-weight:400;color:#ffffff;transform:scaleX(0.9000);transform-origin:0 0;letter-spacing:0.000px;white-space:pre;-webkit-text-stroke:0.05px #fff;">Contract</div>
<div style="position:absolute;left:509.4px;top:488.06px;width:51.0px;height:12.7px;background:#676767;border-radius:2px;"></div>
<div class="t" style="position:absolute;left:512.20px;top:491.33px;font-size:7.6px;line-height:7.6px;font-weight:400;color:#ffffff;transform:scaleX(0.9023);transform-origin:0 0;letter-spacing:0.000px;white-space:pre;-webkit-text-stroke:0.05px #fff;">Sales Manager</div>
<div style="position:absolute;left:497.4px;top:506.42px;width:50.0px;height:12.7px;background:#0b4566;border-radius:2px;"></div>
<div class="t" style="position:absolute;left:500.40px;top:509.69px;font-size:7.6px;line-height:7.6px;font-weight:400;color:#ffffff;transform:scaleX(0.9000);transform-origin:0 0;letter-spacing:0.000px;white-space:pre;-webkit-text-stroke:0.05px #fff;">Cost Calcul...</div>
<div style="position:absolute;left:559.8px;top:506.42px;width:47.80000000000007px;height:12.7px;background:#676767;border-radius:2px;"></div>
<div class="t" style="position:absolute;left:562.60px;top:509.69px;font-size:7.6px;line-height:7.6px;font-weight:400;color:#ffffff;transform:scaleX(0.9236);transform-origin:0 0;letter-spacing:0.000px;white-space:pre;-webkit-text-stroke:0.05px #fff;">Account Lead</div>
<div style="position:absolute;left:497.4px;top:524.7800000000001px;width:50.0px;height:12.7px;background:#0b4566;border-radius:2px;"></div>
<div class="t" style="position:absolute;left:500.40px;top:528.05px;font-size:7.6px;line-height:7.6px;font-weight:400;color:#ffffff;transform:scaleX(0.9000);transform-origin:0 0;letter-spacing:0.000px;white-space:pre;-webkit-text-stroke:0.05px #fff;">Supplier Fe...</div>
<div style="position:absolute;left:559.8px;top:524.7800000000001px;width:75.90000000000009px;height:12.7px;background:#676767;border-radius:2px;"></div>
<div class="t" style="position:absolute;left:562.60px;top:528.05px;font-size:7.6px;line-height:7.6px;font-weight:400;color:#ffffff;transform:scaleX(0.9191);transform-origin:0 0;letter-spacing:0.000px;white-space:pre;-webkit-text-stroke:0.05px #fff;">Business Administrator</div>
<div style="position:absolute;left:547.8px;top:543.14px;width:24.600000000000023px;height:12.7px;background:#0b4566;border-radius:2px;"></div>
<div class="t" style="position:absolute;left:550.80px;top:546.41px;font-size:7.6px;line-height:7.6px;font-weight:400;color:#ffffff;transform:scaleX(0.9000);transform-origin:0 0;letter-spacing:0.000px;white-space:pre;-webkit-text-stroke:0.05px #fff;">Pha...</div>
<div style="position:absolute;left:584.8px;top:543.14px;width:47.80000000000007px;height:12.7px;background:#676767;border-radius:2px;"></div>
<div class="t" style="position:absolute;left:587.60px;top:546.41px;font-size:7.6px;line-height:7.6px;font-weight:400;color:#ffffff;transform:scaleX(0.9236);transform-origin:0 0;letter-spacing:0.000px;white-space:pre;-webkit-text-stroke:0.05px #fff;">Account Lead</div>
<div style="position:absolute;left:647.9px;top:561.3px;width:316.2px;height:12.7px;background:#0b4566;border-radius:2px;"></div>
<div class="t" style="position:absolute;left:651.00px;top:564.57px;font-size:7.6px;line-height:7.6px;font-weight:400;color:#ffffff;transform:scaleX(0.9000);transform-origin:0 0;letter-spacing:0.000px;white-space:pre;-webkit-text-stroke:0.05px #fff;">Ph2 - Release</div>
<div style="position:absolute;left:647.9px;top:579.86px;width:35.10000000000002px;height:12.7px;background:#0b4566;border-radius:2px;"></div>
<div class="t" style="position:absolute;left:650.90px;top:583.13px;font-size:7.6px;line-height:7.6px;font-weight:400;color:#ffffff;transform:scaleX(0.9000);transform-origin:0 0;letter-spacing:0.000px;white-space:pre;-webkit-text-stroke:0.05px #fff;">Drawin...</div>
<div style="position:absolute;left:695.3px;top:579.86px;width:76.10000000000002px;height:12.7px;background:#676767;border-radius:2px;"></div>
<div class="t" style="position:absolute;left:698.10px;top:583.13px;font-size:7.6px;line-height:7.6px;font-weight:400;color:#ffffff;transform:scaleX(0.9217);transform-origin:0 0;letter-spacing:0.000px;white-space:pre;-webkit-text-stroke:0.05px #fff;">Business Administrator</div>
<div style="position:absolute;left:683.3px;top:598.22px;width:50.5px;height:12.7px;background:#0b4566;border-radius:2px;"></div>
<div class="t" style="position:absolute;left:686.30px;top:601.49px;font-size:7.6px;line-height:7.6px;font-weight:400;color:#ffffff;transform:scaleX(0.9000);transform-origin:0 0;letter-spacing:0.000px;white-space:pre;-webkit-text-stroke:0.05px #fff;">Workbook P...</div>
<div style="position:absolute;left:746px;top:598.22px;width:50.700000000000045px;height:12.7px;background:#676767;border-radius:2px;"></div>
<div class="t" style="position:absolute;left:748.80px;top:601.49px;font-size:7.6px;line-height:7.6px;font-weight:400;color:#ffffff;transform:scaleX(0.8963);transform-origin:0 0;letter-spacing:0.000px;white-space:pre;-webkit-text-stroke:0.05px #fff;">Sales Manager</div>
<div style="position:absolute;left:683.3px;top:616.58px;width:50.5px;height:12.7px;background:#0b4566;border-radius:2px;"></div>
<div class="t" style="position:absolute;left:686.30px;top:619.85px;font-size:7.6px;line-height:7.6px;font-weight:400;color:#ffffff;transform:scaleX(0.9000);transform-origin:0 0;letter-spacing:0.000px;white-space:pre;-webkit-text-stroke:0.05px #fff;">Capex Req...</div>
<div style="position:absolute;left:746px;top:616.58px;width:50.700000000000045px;height:12.7px;background:#676767;border-radius:2px;"></div>
<div class="t" style="position:absolute;left:748.80px;top:619.85px;font-size:7.6px;line-height:7.6px;font-weight:400;color:#ffffff;transform:scaleX(0.8963);transform-origin:0 0;letter-spacing:0.000px;white-space:pre;-webkit-text-stroke:0.05px #fff;">Sales Manager</div>
<svg style="left:0;top:0" width="1080" height="679" viewBox="0 0 1080 679">
<path d="M346 439.5 H352 V448.9 M396.2 457.5 H402 V467.5 M447 476.2 H453.8 V485.7 M497 494.6 H503.9 V504.0 M547.4 531 H553 V540.5 M572.6 421.2 H653.6 V558.6 M683 586 H688.9 V595.4 M547.4 512.6 H553.3 V521.7 H491.5 V530.9 H494.5 M733.8 604.3 H740 V613.4 H677.5 V622.5 H680.5 M733.8 622.5 H740 V630 M964.1 567.5 H1040.7" stroke="#4a4a4a" stroke-width="0.9" fill="none"/>
<path d="M349.7 448.4 L354.3 448.4 L352 451.4 Z M399.7 467 L404.3 467 L402 470 Z M451.5 485.2 L456.1 485.2 L453.8 488.2 Z M501.59999999999997 503.5 L506.2 503.5 L503.9 506.5 Z M550.7 540 L555.3 540 L553 543 Z M651.3000000000001 558.1 L655.9 558.1 L653.6 561.1 Z M686.6 594.9 L691.1999999999999 594.9 L688.9 597.9 Z M494.2 528.6 L494.2 533.2 L497.4 530.9 Z M680.2 620.2 L680.2 624.8 L683.3 622.5 Z" fill="#333"/></svg>
</body></html>
